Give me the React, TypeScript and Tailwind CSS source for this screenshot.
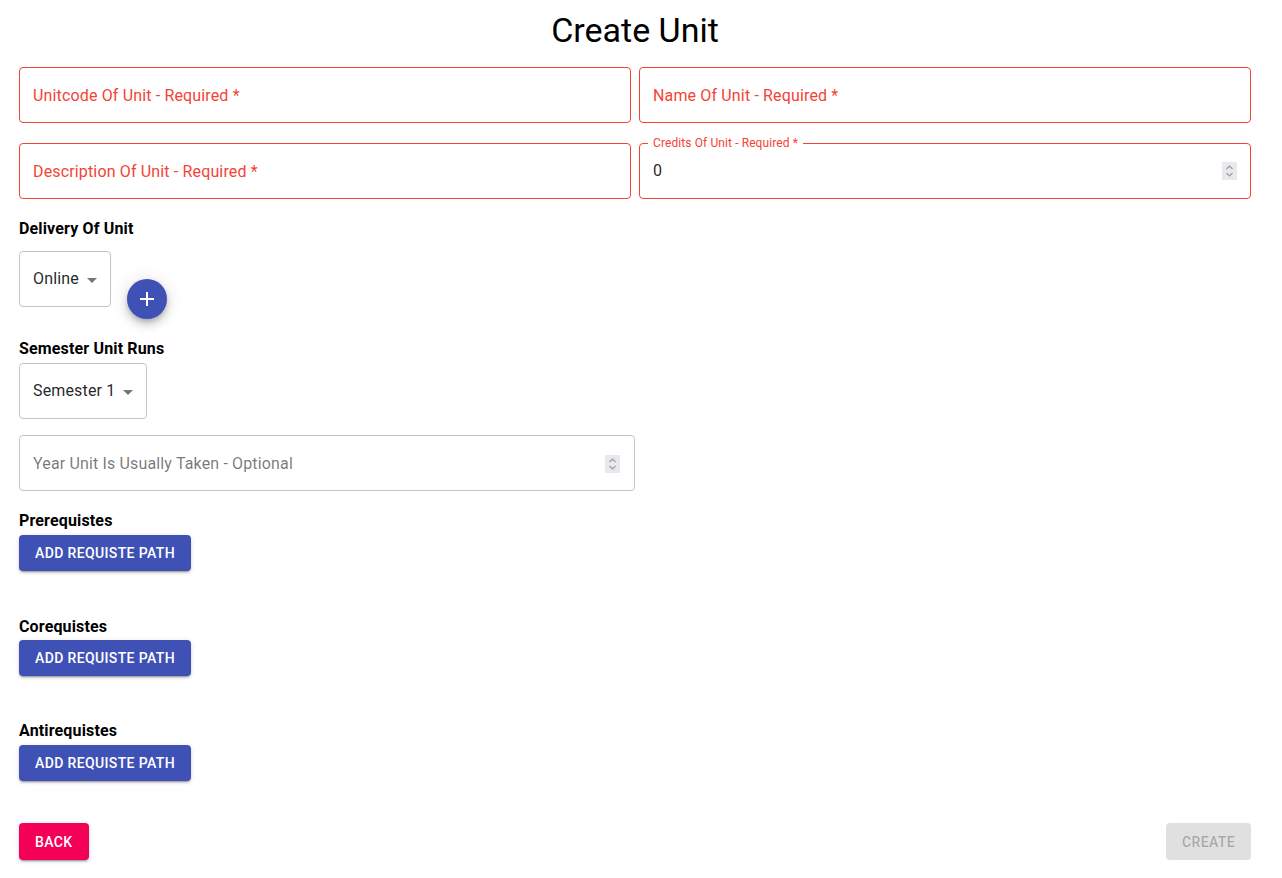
import React from "react";

const font = { fontFamily: "Roboto, 'Helvetica Neue', Arial, sans-serif" };

function Spinner() {
  return (
    <div className="flex h-[18px] w-[15px] flex-col items-center justify-center bg-[#e9e9ed]">
      <svg width="9" height="14" viewBox="0 0 9 14" fill="none" stroke="#9a9aa0" strokeWidth="1.2">
        <path d="M1.5 5 L4.5 2 L7.5 5" />
        <path d="M1.5 9 L4.5 12 L7.5 9" />
      </svg>
    </div>
  );
}

function RequiredField({ label }: { label: string }) {
  return (
    <div className="flex h-[56px] items-center rounded border border-[#f44336] pl-[13px] pt-px">
      <span className="text-base tracking-[0.15px] text-[#f44336]">{label}</span>
    </div>
  );
}

function SelectBox({ value }: { value: string }) {
  return (
    <div className="relative flex h-[56px] items-center rounded border border-[#c4c4c4] pl-[13px] pr-[31px]">
      <span className="text-base tracking-[0.15px] text-[rgba(0,0,0,0.87)]">{value}</span>
      <svg className="absolute right-[6px] top-[16px]" width="24" height="24" viewBox="0 0 24 24" fill="rgba(0,0,0,0.54)">
        <path d="M7 10l5 5 5-5z" />
      </svg>
    </div>
  );
}

function SectionLabel({ text }: { text: string }) {
  return <div className="text-base font-bold leading-6 tracking-[0.15px] text-black">{text}</div>;
}

function RequisteButton() {
  return (
    <button className="h-[36px] rounded bg-[#3f51b5] px-4 text-sm font-medium uppercase tracking-[0.37px] text-white shadow-[0_3px_1px_-2px_rgba(0,0,0,0.2),0_2px_2px_0_rgba(0,0,0,0.14),0_1px_5px_0_rgba(0,0,0,0.12)]">
      Add Requiste Path
    </button>
  );
}

export default function App() {
  return (
    <div className="min-h-screen bg-white pl-[19px] pr-[31px]" style={font}>
      <h1 className="pt-[9px] text-center text-[34px] leading-[42px] text-black">Create Unit</h1>

      <div className="mt-[16px] grid grid-cols-2 gap-x-[8px] gap-y-[20px]">
        <RequiredField label="Unitcode Of Unit - Required *" />
        <RequiredField label="Name Of Unit - Required *" />
        <RequiredField label="Description Of Unit - Required *" />
        <div className="relative flex h-[56px] items-center justify-between rounded border border-[#f44336] pl-[13px] pr-[13px]">
          <span className="absolute -top-[8px] left-[8px] bg-white px-[5px] text-xs leading-[14px] tracking-[0.1px] text-[#f44336]">
            Credits Of Unit - Required *
          </span>
          <span className="text-base text-[rgba(0,0,0,0.87)]">0</span>
          <Spinner />
        </div>
      </div>

      <div className="mt-[18px]">
        <SectionLabel text="Delivery Of Unit" />
      </div>
      <div className="mt-[10px] flex items-start">
        <SelectBox value="Online" />
        <button className="ml-[16px] mt-[28px] flex h-[40px] w-[40px] items-center justify-center rounded-full bg-[#3f51b5] shadow-[0_3px_5px_-1px_rgba(0,0,0,0.2),0_6px_10px_0_rgba(0,0,0,0.14),0_1px_18px_0_rgba(0,0,0,0.12)]">
          <svg width="24" height="24" viewBox="0 0 24 24" fill="white">
            <path d="M19 13h-6v6h-2v-6H5v-2h6V5h2v6h6v2z" />
          </svg>
        </button>
      </div>

      <div className="mt-[18px]">
        <SectionLabel text="Semester Unit Runs" />
      </div>
      <div className="mt-[2px] flex">
        <SelectBox value="Semester 1" />
      </div>

      <div className="mt-[16px] flex h-[56px] w-[616px] items-center justify-between rounded border border-[#c4c4c4] pl-[13px] pr-[14px] pt-px">
        <span className="text-base tracking-[0.15px] text-[rgba(0,0,0,0.54)]">Year Unit Is Usually Taken - Optional</span>
        <Spinner />
      </div>

      <div className="mt-[18px]">
        <SectionLabel text="Prerequistes" />
      </div>
      <div className="mt-[2px]">
        <RequisteButton />
      </div>

      <div className="mt-[44px]">
        <SectionLabel text="Corequistes" />
      </div>
      <div className="mt-[1px]">
        <RequisteButton />
      </div>

      <div className="mt-[43px]">
        <SectionLabel text="Antirequistes" />
      </div>
      <div className="mt-[2px]">
        <RequisteButton />
      </div>

      <div className="mt-[42px] flex justify-between">
        <button className="h-[37px] rounded bg-[#f50057] px-4 text-sm font-medium uppercase tracking-[0.4px] text-white shadow-[0_3px_1px_-2px_rgba(0,0,0,0.2),0_2px_2px_0_rgba(0,0,0,0.14),0_1px_5px_0_rgba(0,0,0,0.12)]">
          Back
        </button>
        <button className="h-[37px] rounded bg-[#e0e0e0] px-4 text-sm font-medium uppercase tracking-[0.4px] text-[rgba(0,0,0,0.26)]">
          Create
        </button>
      </div>
    </div>
  );
}
